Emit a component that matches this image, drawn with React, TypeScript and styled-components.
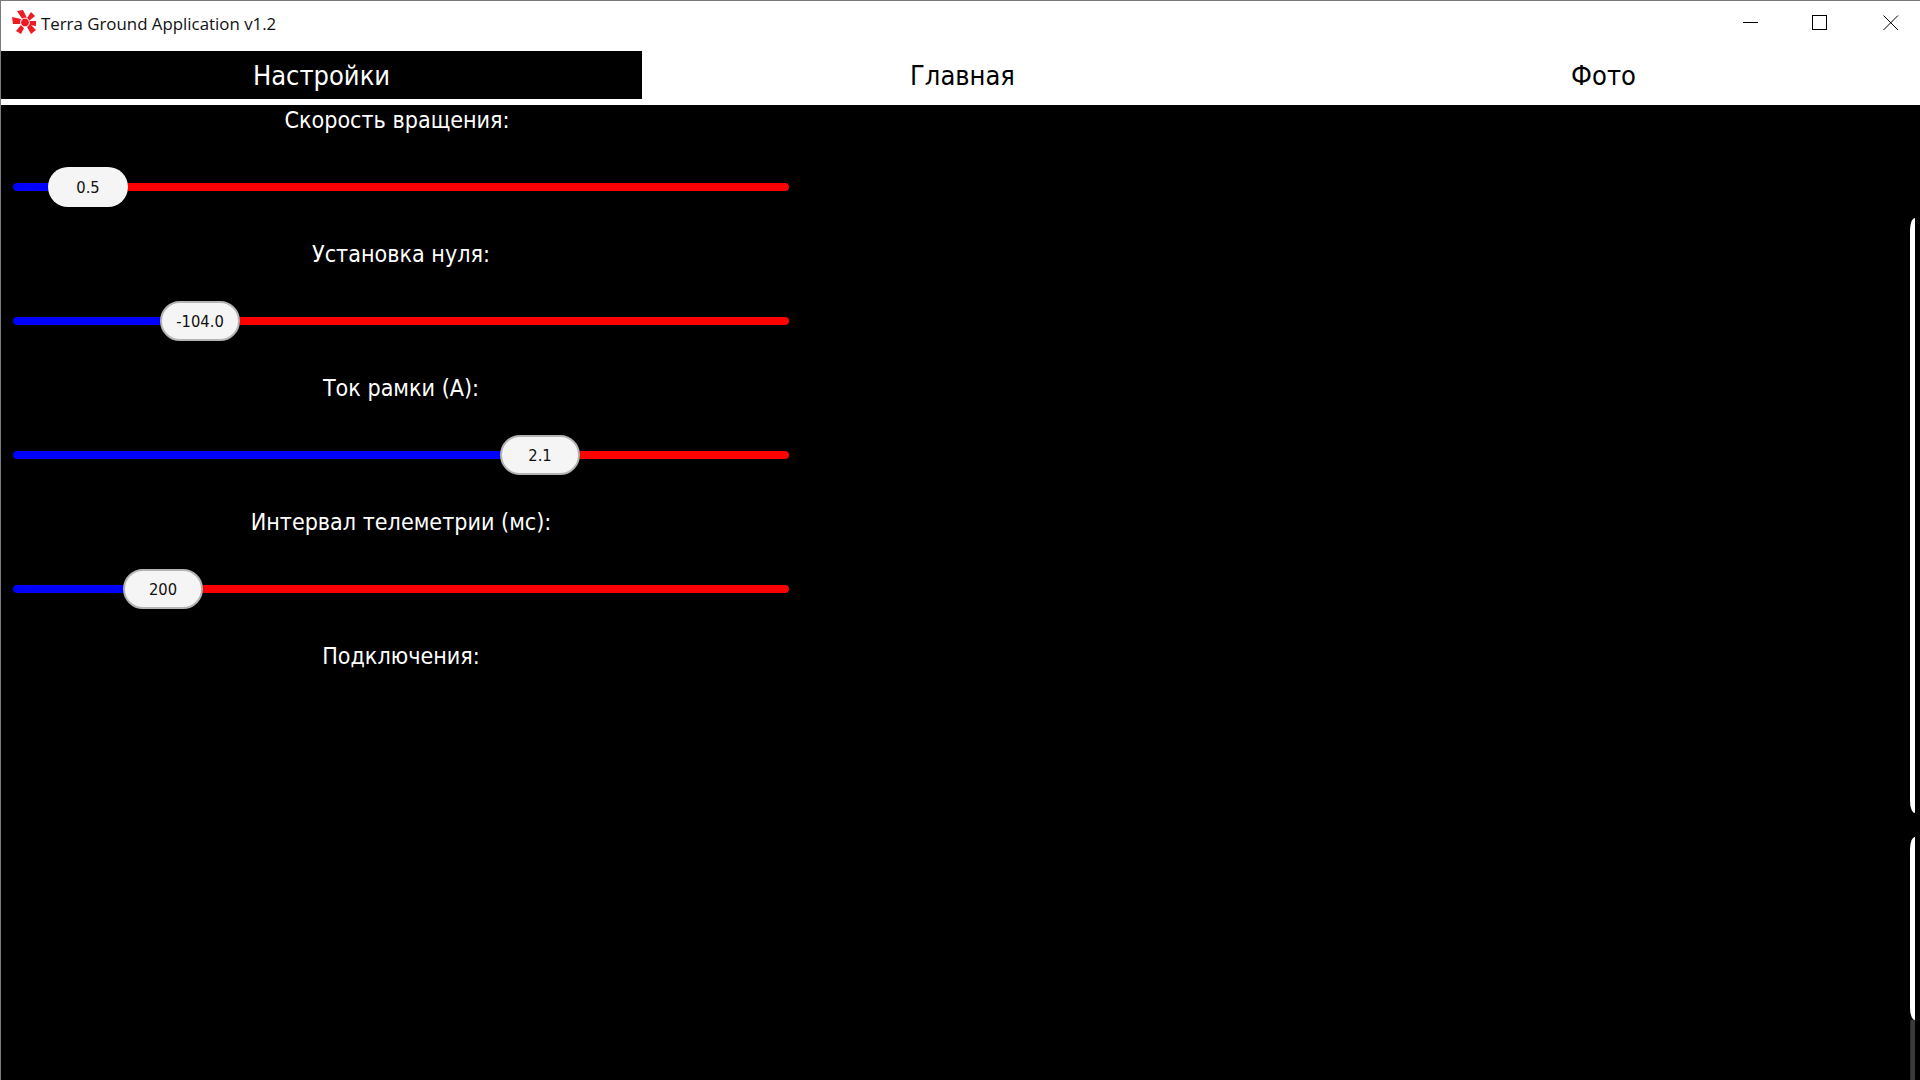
import styled, { createGlobalStyle } from "styled-components";

const GlobalStyle = createGlobalStyle`
  html, body {
    margin: 0;
    padding: 0;
    background: #000;
    overflow: hidden;
  }
`;

const uiFont = `"DejaVu Sans Condensed", "DejaVu Sans", sans-serif`;

const Window = styled.div`
  width: 1920px;
  height: 1080px;
  display: flex;
  flex-direction: column;
  overflow: hidden;
  background: #000;
  border-left: 1px solid #7a7a7a;
  box-sizing: border-box;
`;

const TitleBar = styled.div`
  flex: 0 0 51px;
  box-sizing: border-box;
  display: flex;
  align-items: center;
  background: #fff;
  border-top: 1px solid #7a7a7a;
  padding: 0 0 6px 10px;
`;

const AppTitle = styled.span`
  margin-left: 4px;
  font-family: "Open Sans", "Noto Sans", sans-serif;
  font-size: 16.85px;
  color: #111;
`;

const WindowControls = styled.div`
  margin-left: auto;
  display: flex;
  align-items: center;
  padding-right: 21px;
  gap: 55px;
`;

const ControlIcon = styled.svg`
  display: block;
  width: 16px;
  height: 16px;

  &:first-child {
    margin-right: -2px;
  }
`;

const TabBar = styled.div`
  flex: 0 0 54px;
  display: grid;
  grid-template-columns: repeat(3, 641px);
  background: #fff;
`;

const Tab = styled.div<{ $active?: boolean }>`
  height: 48px;
  display: flex;
  align-items: center;
  justify-content: center;
  font-family: ${uiFont};
  font-size: 27px;
  color: ${(p) => (p.$active ? "#fff" : "#000")};
  background: ${(p) => (p.$active ? "#000" : "#fff")};
`;

const Content = styled.div`
  flex: 1;
  display: flex;
  min-height: 0;
`;

const SettingsPanel = styled.div`
  width: 800px;
`;

const Setting = styled.section`
  height: 134px;
  display: flex;
  flex-direction: column;
`;

const Label = styled.div<{ $shift?: number }>`
  height: 30px;
  margin-right: ${(p) => p.$shift ?? 0}px;
  display: flex;
  align-items: center;
  justify-content: center;
  font-family: ${uiFont};
  font-size: 23.1px;
  color: #fff;
`;

const Slider = styled.div`
  width: 776px;
  margin: 32px 0 0 12px;
  height: 40px;
  display: flex;
  align-items: center;
`;

const LowFill = styled.div<{ $width: number }>`
  width: ${(p) => p.$width}px;
  height: 8px;
  background: #0000ff;
  border-radius: 4px 0 0 4px;
`;

const HighFill = styled.div`
  flex: 1;
  height: 8px;
  background: #ff0000;
  border-radius: 0 4px 4px 0;
`;

const Thumb = styled.div<{ $ringed?: boolean }>`
  width: 80px;
  height: 40px;
  box-sizing: border-box;
  border-radius: 20px;
  background: #f5f5f5;
  border: ${(p) => (p.$ringed ? "2px solid #b4b4b4" : "none")};
  display: flex;
  align-items: center;
  justify-content: center;
  font-family: ${uiFont};
  font-size: 16.4px;
  color: #111;
`;

const ScrollRail = styled.div`
  margin-left: auto;
  margin-right: 5px;
  width: 5px;
  display: flex;
  flex-direction: column;
`;

const RailGap = styled.div<{ $height: number }>`
  flex: 0 0 ${(p) => p.$height}px;
`;

const RailSegment = styled.div<{ $height: number }>`
  flex: 0 0 ${(p) => p.$height}px;
  background: #fff;
  border-radius: 5px 0 0 5px / 12px 0 0 12px;
`;

const RailEnd = styled.div`
  flex: 1;
  background: #3a3a3a;
  border-left: 1px solid #2a2a2a;
`;

const settings = [
  { label: "Скорость вращения:", value: "0.5", low: 35, shift: 8 },
  { label: "Установка нуля:", value: "-104.0", low: 147, ringed: true },
  { label: "Ток рамки (А):", value: "2.1", low: 487, ringed: true },
  { label: "Интервал телеметрии (мс):", value: "200", low: 110, ringed: true },
];

function TerraLogo() {
  return (
    <svg width="26" height="26" viewBox="0 0 26 26">
      <g fill="#ed1c24">
        <path d="M6 1 L12 0 L16 8 L12 10 Z" />
        <path d="M16 8 L20 2 L24 6 L18 11 Z" />
        <path d="M1 7 L10 9 L9 14 L2 14 Z" />
        <path d="M18 11 L25 11 L25 16 L18 15 Z" />
        <path d="M10 15 L13 18 L10 24 L5 21 Z" />
        <path d="M16 17 L19 14 L25 20 L20 24 Z" />
      </g>
      <circle cx="14" cy="12.5" r="4.4" fill="#ed1c24" stroke="#fff" strokeWidth="1" />
    </svg>
  );
}

export default function App() {
  return (
    <>
      <GlobalStyle />
      <Window>
        <TitleBar>
          <TerraLogo />
          <AppTitle>Terra Ground Application v1.2</AppTitle>
          <WindowControls>
            <ControlIcon viewBox="0 0 16 16">
              <path d="M0 7.5H15" stroke="#000" strokeWidth="1" />
            </ControlIcon>
            <ControlIcon viewBox="0 0 16 16">
              <rect x="0.5" y="0.5" width="14" height="14" fill="none" stroke="#000" strokeWidth="1" />
            </ControlIcon>
            <ControlIcon viewBox="0 0 16 16">
              <path d="M0.5 0.5L15 15M15 0.5L0.5 15" stroke="#000" strokeWidth="1" />
            </ControlIcon>
          </WindowControls>
        </TitleBar>
        <TabBar>
          <Tab $active>Настройки</Tab>
          <Tab>Главная</Tab>
          <Tab>Фото</Tab>
        </TabBar>
        <Content>
          <SettingsPanel>
            {settings.map((s) => (
              <Setting key={s.label}>
                <Label $shift={s.shift}>{s.label}</Label>
                <Slider>
                  <LowFill $width={s.low} />
                  <Thumb $ringed={s.ringed}>{s.value}</Thumb>
                  <HighFill />
                </Slider>
              </Setting>
            ))}
            <Setting>
              <Label>Подключения:</Label>
            </Setting>
          </SettingsPanel>
          <ScrollRail>
            <RailGap $height={113} />
            <RailSegment $height={595} />
            <RailGap $height={24} />
            <RailSegment $height={183} />
            <RailEnd />
          </ScrollRail>
        </Content>
      </Window>
    </>
  );
}
